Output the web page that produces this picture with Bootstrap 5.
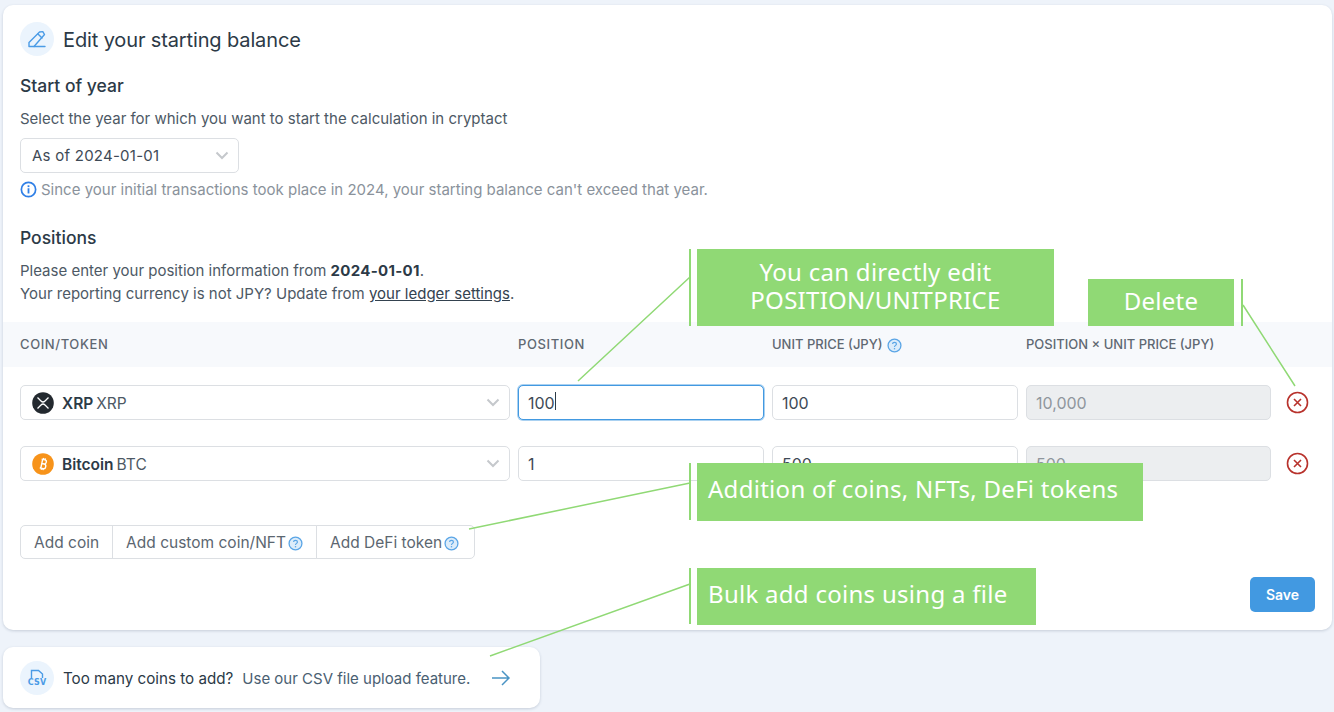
<!DOCTYPE html>
<html lang="en">
<head>
    <meta charset="UTF-8">
    <meta name="viewport" content="width=device-width, initial-scale=1.0">
    <title>Edit your starting balance</title>
    <link href="https://cdn.jsdelivr.net/npm/bootstrap@5.3.0/dist/css/bootstrap.min.css" rel="stylesheet">
    <style>
        html, body { height: 712px; overflow: hidden; }
        body { background: #eef3fa; font-family: Inter, "Liberation Sans", sans-serif; color: #34424f; font-size: 15px; position: relative; }
        .page-wrap { padding: 5px 2px 0 3px; }
        .main-panel { height: 625px; background: #fff; border-radius: 10px; box-shadow: 0 1px 3px rgba(40, 60, 90, .2); padding-top: 17px; }
        .panel-pad { padding: 0 17px; }
        .icon-round { width: 34px; height: 34px; border-radius: 50%; background: #ebf4fd; flex: none; }
        .title-text { font-size: 20px; line-height: 36px; color: #2c3a47; font-weight: 400; margin: 0 0 -2px 9px; letter-spacing: -0.13px; }
        .sub-title { font-size: 17.5px; line-height: 24px; font-weight: 500; color: #2c3a47; margin: 0; }
        .year-title { margin-top: 18px; }
        .help-line { line-height: 22px; color: #4d5965; margin: 10px 0 8px; }
        .year-select { width: 219px; height: 35px; }
        .fake-select { border: 1px solid #dcdfe3; border-radius: 5px; background: #fff; height: 35px; padding-left: 11px; padding-right: 9px; color: #3e4a56; }
        .year-select span { letter-spacing: .25px; padding-top: 2px; }
        .note-line { height: 20px; line-height: 20px; margin-top: 6px; color: #8a929b; }
        .note-line span { padding-top: 2px; }
        .pos-title { margin-top: 27px; }
        .pos-help { line-height: 23px; margin: 9px 0 0; color: #4d5965; }
        .pos-help a { color: #34424f; }
        .pos-help b { color: #2c3a47; font-weight: 700; letter-spacing: .3px; }
        .coin-grid { display: grid; grid-template-columns: 490px 246px 246px 245px; column-gap: 8px; align-items: center; }
        .table-head { background: #f7f9fc; height: 45px; margin-top: 17px; padding-left: 17px; font-size: 13px; color: #5f6872; font-weight: 500; padding-top: 1px; }
        .head-wide { letter-spacing: .6px; }
        .coin-row { padding-left: 17px; height: 35px; position: relative; }
        .first-row { margin-top: 18px; }
        .second-row { margin-top: 26px; }
        .coin-input { height: 35px; border: 1px solid #dcdfe3; border-radius: 5px; font-size: 16px; color: #3e4a56; padding: 0 9px; box-shadow: none; }
        .coin-input:disabled { background: #eceef0; color: #8f969d; opacity: 1; }
        .coin-focus { border: 1px solid #4299e1; box-shadow: 0 0 0 1px rgba(66, 153, 225, .45); }
        .text-caret { position: absolute; left: 37px; top: 7px; width: 1px; height: 18px; background: #2c3a47; }
        .coin-name { font-weight: 600; color: #2c3a47; font-size: 15.5px; padding-top: 2px; }
        .coin-sym { color: #4d5965; font-size: 15.5px; margin-left: 3px; padding-top: 2px; }
        .coin-logo { margin-right: 8px; flex: none; }
        .del-btn { position: absolute; left: 1283px; top: 6px; width: 23px; height: 23px; line-height: 0; }
        .add-group { margin: 44px 0 0 17px; }
        .add-btn { height: 34px; padding: 2px 13px 0; border: 1px solid #dcdfe3; background: #fff; color: #5b6670; font-size: 15.5px; white-space: nowrap; display: inline-flex; align-items: center; --bs-btn-border-radius: 5px; }
        .add-btn:last-child { padding-right: 15px; }
        .add-btn svg { margin-left: 2px; }
        .save-row { padding: 18px 17px 0 0; }
        .save-btn { width: 65px; height: 35px; background: #4299e1; color: #fff; font-weight: 600; font-size: 14px; padding: 0; border: 0; border-radius: 5px; }
        .csv-panel { width: 537px; height: 61px; margin-top: 17px; background: #fff; border-radius: 10px; box-shadow: 0 1px 3px rgba(40, 60, 90, .2); padding: 0 17px; }
        .csv-tag { font-family: "DejaVu Sans", sans-serif; font-size: 8px; line-height: 9px; font-weight: 700; color: #4a9be6; letter-spacing: .2px; }
        .csv-strong { color: #2c3a47; margin-left: 9px; font-size: 15.2px; padding-top: 3px; }
        .csv-soft { color: #4a6072; margin-left: 9px; padding-top: 3px; }
        .csv-arrow { margin-left: 21px; }
        .note-box { position: absolute; background: #90d975; color: #fff; font-family: "Noto Sans", sans-serif; font-size: 24px; line-height: 28px; letter-spacing: .28px; }
        .box-edit { left: 697px; top: 249px; width: 357px; height: 77px; text-align: center; padding-top: 9px; }
        .box-del { left: 1088px; top: 279px; width: 146px; height: 47px; text-align: center; padding-top: 8px; }
        .box-add { left: 697px; top: 463px; width: 446px; height: 58px; padding: 12px 0 0 11px; }
        .box-bulk { left: 697px; top: 568px; width: 339px; height: 57px; padding: 12px 0 0 11px; }
        .note-lines { position: absolute; left: 0; top: 0; pointer-events: none; }
    </style>
</head>
<body>
    <div class="page-wrap">
        <div class="main-panel">
            <div class="panel-pad">
                <div class="d-flex align-items-center">
                    <div class="icon-round d-flex align-items-center justify-content-center">
                        <svg width="20" height="20" viewBox="0 0 20 20" fill="none" stroke="#4a9be6" stroke-width="1.4" stroke-linejoin="round" stroke-linecap="round"><path d="M2 17.5V13.5L12.5 3L15.8 2.6L17.5 5.5L7 17.5H2Z"/><path d="M11 5L15 9"/><path d="M7 17.5H18"/></svg>
                    </div>
                    <h1 class="title-text">Edit your starting balance</h1>
                </div>
                <h2 class="sub-title year-title">Start of year</h2>
                <p class="help-line">Select the year for which you want to start the calculation in cryptact</p>
                <div class="fake-select year-select d-flex align-items-center justify-content-between">
                    <span>As of 2024-01-01</span>
                    <svg width="14" height="9" viewBox="0 0 14 9" fill="none" stroke="#c5c8cc" stroke-width="2"><path d="M1.5 1.5L7 7L12.5 1.5"/></svg>
                </div>
                <div class="note-line d-flex align-items-center">
                    <svg class="me-1" width="17" height="17" viewBox="0 0 15 15" fill="none"><circle cx="7.5" cy="7.5" r="6.3" stroke="#2f7fe6" stroke-width="1.5"/><rect x="6.7" y="6.4" width="1.6" height="4.6" fill="#2f7fe6"/><rect x="6.7" y="3.8" width="1.6" height="1.6" fill="#2f7fe6"/></svg>
                    <span>Since your initial transactions took place in 2024, your starting balance can't exceed that year.</span>
                </div>
                <h2 class="sub-title pos-title">Positions</h2>
                <p class="pos-help">Please enter your position information from <b>2024-01-01</b>.<br>Your reporting currency is not JPY? Update from <a href="#">your ledger settings</a>.</p>
            </div>

            <div class="table-head coin-grid">
                <div class="head-wide">COIN/TOKEN</div>
                <div class="head-wide">POSITION</div>
                <div class="d-flex align-items-center">UNIT PRICE (JPY)
                    <svg class="ms-1" width="15" height="15" viewBox="0 0 14 14" fill="none"><circle cx="7" cy="7" r="6" fill="#dcecfa" stroke="#5aa5e6" stroke-width="1.2"/><path d="M5.2 5.6C5.2 3.6 8.8 3.6 8.8 5.6C8.8 6.9 7 6.9 7 8.4" stroke="#5aa5e6" stroke-width="1.1"/><rect x="6.4" y="9.4" width="1.2" height="1.2" fill="#5aa5e6"/></svg>
                </div>
                <div>POSITION × UNIT PRICE (JPY)</div>
            </div>

            <div class="coin-row coin-grid first-row">
                <div class="fake-select d-flex align-items-center justify-content-between">
                    <div class="d-flex align-items-center">
                        <svg class="coin-logo" width="22" height="22" viewBox="0 0 22 22"><circle cx="11" cy="11" r="10.8" fill="#23292f"/><path d="M5.5 5.5L9 9C10.1 10.1 11.9 10.1 13 9L16.5 5.5M5.5 16.5L9 13C10.1 11.9 11.9 11.9 13 13L16.5 16.5" fill="none" stroke="#fff" stroke-width="1.3"/></svg>
                        <span class="coin-name">XRP</span><span class="coin-sym">XRP</span>
                    </div>
                    <svg width="14" height="9" viewBox="0 0 14 9" fill="none" stroke="#c5c8cc" stroke-width="2"><path d="M1.5 1.5L7 7L12.5 1.5"/></svg>
                </div>
                <div class="position-relative">
                    <input class="form-control coin-input coin-focus" type="text" value="100">
                    <div class="text-caret"></div>
                </div>
                <input class="form-control coin-input" type="text" value="100">
                <input class="form-control coin-input" type="text" value="10,000" disabled>
                <div class="del-btn">
                    <svg width="23" height="23" viewBox="0 0 23 23" fill="none" stroke="#b8322c" stroke-width="1.6"><circle cx="11.5" cy="11.5" r="10"/><path d="M8 8L15 15M15 8L8 15"/></svg>
                </div>
            </div>

            <div class="coin-row coin-grid second-row">
                <div class="fake-select d-flex align-items-center justify-content-between">
                    <div class="d-flex align-items-center">
                        <svg class="coin-logo" width="22" height="22" viewBox="0 0 22 22"><circle cx="11" cy="11" r="10.8" fill="#f7931a"/><path d="M8.6 6.5H12.2C14.4 6.5 14.4 10.6 12.2 10.8C14.9 10.8 14.9 15.5 12.2 15.5H8.6M9.7 6.5V15.5M9.7 10.8H12.2M10.4 5V6.5M12.2 5V6.5M10.4 15.5V17M12.2 15.5V17" transform="rotate(12 11 11)" fill="none" stroke="#fff" stroke-width="1.4"/></svg>
                        <span class="coin-name">Bitcoin</span><span class="coin-sym">BTC</span>
                    </div>
                    <svg width="14" height="9" viewBox="0 0 14 9" fill="none" stroke="#c5c8cc" stroke-width="2"><path d="M1.5 1.5L7 7L12.5 1.5"/></svg>
                </div>
                <input class="form-control coin-input" type="text" value="1">
                <input class="form-control coin-input" type="text" value="500">
                <input class="form-control coin-input" type="text" value="500" disabled>
                <div class="del-btn">
                    <svg width="23" height="23" viewBox="0 0 23 23" fill="none" stroke="#b8322c" stroke-width="1.6"><circle cx="11.5" cy="11.5" r="10"/><path d="M8 8L15 15M15 8L8 15"/></svg>
                </div>
            </div>

            <div class="btn-group add-group" role="group">
                <button type="button" class="btn add-btn">Add coin</button>
                <button type="button" class="btn add-btn">Add custom coin/NFT
                    <svg width="15" height="15" viewBox="0 0 14 14" fill="none"><circle cx="7" cy="7" r="6" fill="#dcecfa" stroke="#5aa5e6" stroke-width="1.2"/><path d="M5.2 5.6C5.2 3.6 8.8 3.6 8.8 5.6C8.8 6.9 7 6.9 7 8.4" stroke="#5aa5e6" stroke-width="1.1"/><rect x="6.4" y="9.4" width="1.2" height="1.2" fill="#5aa5e6"/></svg>
                </button>
                <button type="button" class="btn add-btn">Add DeFi token
                    <svg width="15" height="15" viewBox="0 0 14 14" fill="none"><circle cx="7" cy="7" r="6" fill="#dcecfa" stroke="#5aa5e6" stroke-width="1.2"/><path d="M5.2 5.6C5.2 3.6 8.8 3.6 8.8 5.6C8.8 6.9 7 6.9 7 8.4" stroke="#5aa5e6" stroke-width="1.1"/><rect x="6.4" y="9.4" width="1.2" height="1.2" fill="#5aa5e6"/></svg>
                </button>
            </div>

            <div class="save-row d-flex justify-content-end">
                <button type="button" class="btn save-btn">Save</button>
            </div>
        </div>

        <div class="csv-panel d-flex align-items-center">
            <div class="icon-round d-flex flex-column align-items-center justify-content-center">
                <svg width="14" height="9" viewBox="0 0 14 9" fill="none" stroke="#4a9be6" stroke-width="1.4"><path d="M1.5 9V1.5H8.5L12.5 5V9"/></svg>
                <span class="csv-tag">CSV</span>
            </div>
            <span class="csv-strong">Too many coins to add?</span>
            <span class="csv-soft">Use our CSV file upload feature.</span>
            <svg class="csv-arrow" width="20" height="18" viewBox="0 0 20 18" fill="none" stroke="#4a94c4" stroke-width="1.5"><path d="M1 9H18M11 2L18 9L11 16"/></svg>
        </div>
    </div>

    <svg class="note-lines" width="1334" height="712" fill="none" stroke="#90d975" stroke-width="1.5">
        <path d="M690 249V326M1242 279V326M690 463V520M690 568V624" stroke-width="2"/>
        <path d="M690 277L578 381M1243 305L1295 386M690 483L469 529M690 584L490 656"/>
    </svg>
    <div class="note-box box-edit">You can directly edit<br>POSITION/UNITPRICE</div>
    <div class="note-box box-del">Delete</div>
    <div class="note-box box-add">Addition of coins, NFTs, DeFi tokens</div>
    <div class="note-box box-bulk">Bulk add coins using a file</div>

    <script src="https://cdn.jsdelivr.net/npm/bootstrap@5.3.0/dist/js/bootstrap.bundle.min.js"></script>
</body>
</html>
